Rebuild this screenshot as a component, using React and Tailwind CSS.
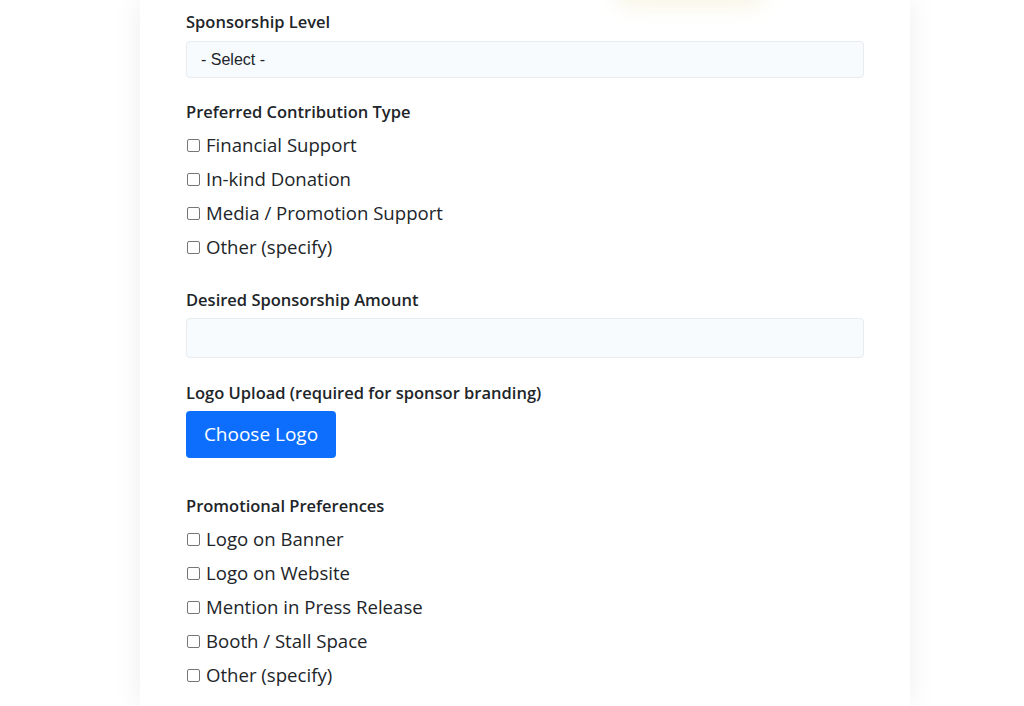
const contributionTypes = ['Financial Support', 'In-kind Donation', 'Media / Promotion Support', 'Other (specify)']
const promoPrefs = ['Logo on Banner', 'Logo on Website', 'Mention in Press Release', 'Booth / Stall Space', 'Other (specify)']

const font = { fontFamily: '"Open Sans", Lato, sans-serif' }

function Label({ children, className = '' }) {
  return (
    <div className={`h-5 text-[16.5px] leading-5 font-semibold text-[#212529] ${className}`}>{children}</div>
  )
}

function CheckRow({ text }) {
  return (
    <label className="flex h-[34px] items-center">
      <span className="ml-px h-[13px] w-[13px] shrink-0 rounded-[2px] border border-[#767676] bg-white" />
      <span className="ml-[6px] text-[18.6px] leading-none text-[#212529]">{text}</span>
    </label>
  )
}

export default function App() {
  return (
    <div className="relative h-[706px] w-[1024px] overflow-hidden bg-white" style={font}>
      <div className="ml-[140px] h-full w-[770px] bg-white px-[46px] pt-[12px] shadow-[0_0_28px_rgba(0,0,0,0.07)]">
        <Label>Sponsorship Level</Label>
        <div className="mt-[9px] flex h-[37px] items-center rounded-[4px] border border-[#e6ecf0] bg-[#f8fbfd] px-[14px] text-[16px] text-[#212529]" style={{ fontFamily: '"Liberation Sans", Arial, sans-serif' }}>
          - Select -
        </div>

        <Label className="mt-[24px]">Preferred Contribution Type</Label>
        <div className="mt-[6px]">
          {contributionTypes.map((t) => <CheckRow key={t} text={t} />)}
        </div>

        <Label className="mt-[26px]">Desired Sponsorship Amount</Label>
        <div className="mt-[8px] h-[40px] rounded-[4px] border border-[#e6ecf0] bg-[#f8fbfd]" />

        <Label className="mt-[25px]">Logo Upload (required for sponsor branding)</Label>
        <button className="mt-[8px] flex h-[47px] w-[150px] items-center justify-center rounded-[4px] bg-[#0d6efd] text-[19px] text-white">
          Choose Logo
        </button>

        <Label className="mt-[38px]">Promotional Preferences</Label>
        <div className="mt-[6px]">
          {promoPrefs.map((t, i) => <CheckRow key={i} text={t} />)}
        </div>
      </div>
      <div className="pointer-events-none absolute left-[615px] top-[-20px] h-[28px] w-[150px] rounded-full bg-[#f3f0d8] opacity-60 blur-[10px]" />
    </div>
  )
}
